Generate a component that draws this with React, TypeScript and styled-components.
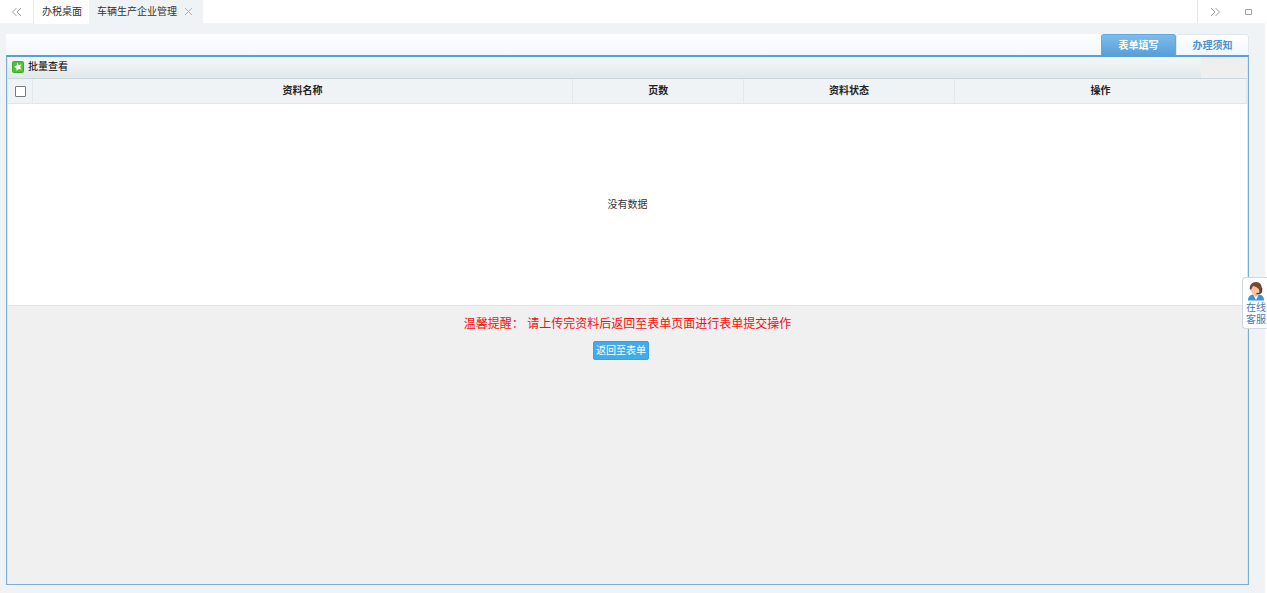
import React from "react";
import styled, { createGlobalStyle } from "styled-components";

const GlobalStyle = createGlobalStyle`
  * { box-sizing: border-box; }
  body { margin: 0; background: #fff; }
  body, button, input, table {
    font-family: "Liberation Sans", "Noto Sans CJK SC", sans-serif;
    font-size: 10px;
  }
`;

const Page = styled.div`
  display: flex;
  flex-direction: column;
  min-height: 100vh;
  margin-right: 2px;
  background: #eff3f6;
`;

const TopBar = styled.nav`
  display: flex;
  height: 24px;
  background: #fff;
  border-bottom: 1px solid #f1f3f5;
`;

const BarButton = styled.button<{ $width: number }>`
  display: flex;
  align-items: center;
  justify-content: center;
  width: ${(p) => p.$width}px;
  padding: 0 1px 0 0;
  border: 0;
  background: transparent;
  color: #a0a0a0;
`;

const PageTab = styled.div<{ $active?: boolean }>`
  display: flex;
  align-items: center;
  gap: 7px;
  height: 24px;
  padding: 0 ${(p) => (p.$active ? 10 : 7)}px 0 ${(p) => (p.$active ? 7 : 8)}px;
  border-left: 1px solid ${(p) => (p.$active ? "#eff3f6" : "#e8eaec")};
  background: ${(p) => (p.$active ? "#eff3f6" : "#fff")};
`;

const TabLink = styled.a`
  color: #333;
  line-height: 24px;
  text-decoration: none;
  white-space: nowrap;
`;

const CloseButton = styled.button`
  display: flex;
  width: 9px;
  padding: 0 0 2px;
  border: 0;
  background: transparent;
  color: #adb1b4;
`;

const BarEnd = styled.div`
  display: flex;
  margin-left: auto;
  border-left: 1px solid #e4e6e8;
`;

const Content = styled.main`
  display: flex;
  flex: 1;
  flex-direction: column;
  padding: 10px 16px 8px 6px;
`;

const FormTabs = styled.div`
  display: flex;
  justify-content: flex-end;
  height: 21px;
  background: linear-gradient(#fdfeff, #f1f8fd);
`;

const FormTab = styled.button<{ $active?: boolean }>`
  width: ${(p) => (p.$active ? 75 : 73)}px;
  padding: 1px 0 0;
  border: 1px solid ${(p) => (p.$active ? "#62a8de" : "#dfe8ee")};
  border-bottom: 0;
  border-radius: 3px 3px 0 0;
  background: ${(p) =>
    p.$active ? "linear-gradient(#7dbced, #5a9fd8)" : "linear-gradient(#fff, #eff7fd)"};
  color: ${(p) => (p.$active ? "#fff" : "#4b94d0")};
  font-weight: bold;
  line-height: 20px;
`;

const Panel = styled.section`
  display: flex;
  flex: 1;
  flex-direction: column;
  padding: 0 1px;
  border: 1px solid #7aaed6;
  border-top: 2px solid #5aa0d8;
  background: #f0f0f0;
  box-shadow: inset 1px 0 #d3e8f8, inset -1px 0 #d3e8f8, inset 0 -1px #e3f2fb;
`;

const Toolbar = styled.div`
  display: flex;
  height: 22px;
  padding-right: 46px;
  border-bottom: 1px solid #ccd8dc;
  background: #efefef;
`;

const ToolbarFill = styled.div`
  display: flex;
  flex: 1;
  align-items: center;
  padding: 0 0 1px 4px;
  background: linear-gradient(#f3f7f8, #e2e9eb);
`;

const ToolButton = styled.button`
  display: flex;
  align-items: center;
  gap: 4px;
  padding: 0;
  border: 0;
  background: transparent;
  color: #000;
  line-height: 12px;
`;

const DataTable = styled.table`
  width: 100%;
  table-layout: fixed;
  border-collapse: separate;
  border-spacing: 0;
  background: #fff;
`;

const Col = styled.col<{ $width?: string }>`
  width: ${(p) => p.$width ?? "auto"};
`;

const HeadCell = styled.th`
  height: 25px;
  padding: 0;
  border-right: 1px solid #e4e8eb;
  border-bottom: 1px solid #e0e5e8;
  background: #eff3f6;
  color: #222;
  font-weight: bold;
  line-height: 12px;
  text-align: center;
`;

const CheckBox = styled.input`
  appearance: none;
  display: block;
  width: 11px;
  height: 11px;
  margin: 0 auto;
  border: 1px solid #777;
  border-radius: 1px;
  background: #fff;
`;

const EmptyCell = styled.td`
  height: 202px;
  padding: 0 0 2px;
  border-bottom: 1px solid #e4e4e4;
  color: #333;
  text-align: center;
`;

const Footer = styled.div`
  display: flex;
  flex-direction: column;
  align-items: center;
  gap: 8px;
  padding: 9px 13px 0 0;
`;

const Notice = styled.p`
  margin: 0 0 0 13px;
  color: #f00f0f;
  font-size: 12px;
  line-height: 18px;
  white-space: pre;
`;

const ReturnButton = styled.button`
  height: 19px;
  padding: 0 2px;
  border: 1px solid #38a0e4;
  border-radius: 2px;
  background: #43abed;
  color: #fff;
  line-height: 17px;
`;

const ServiceLink = styled.a`
  position: fixed;
  top: 277px;
  right: 0;
  display: flex;
  flex-direction: column;
  align-items: center;
  width: 25px;
  height: 52px;
  padding: 4px 0 0 2px;
  border: 1px solid #cfdae3;
  border-right: 0;
  border-radius: 4px 0 0 4px;
  background: #fff;
  color: #3f79b5;
  line-height: 12px;
  text-decoration: none;
`;

const ServiceText = styled.span`
  width: 20px;
  padding-top: 1px;
`;

const Chevrons = ({ right = false }: { right?: boolean }) => (
  <svg width="11" height="10" viewBox="0 0 11 10" fill="none" stroke="currentColor" aria-hidden="true">
    <path d={right ? "M1 1l4 4-4 4M5.500 1l4 4-4 4" : "M5.500 1l-4 4 4 4M10 1L6 5l4 4"} />
  </svg>
);

const StarIcon = () => (
  <svg width="12" height="12" viewBox="0 0 12 12" aria-hidden="true">
    <rect width="12" height="12" rx="2" fill="#3fae27" />
    <rect x="1" y="1" width="10" height="10" rx="1" fill="#55c038" />
    <path d="M5.200 1.800l1.700 2.100 2.700-.3-1.400 2.300 1.400 2.500-2.800-.5-2.200 1.900-.3-2.700L2 5.800l2.600-1.200z" fill="#fff" />
  </svg>
);

const AgentIcon = () => (
  <svg width="18" height="19" viewBox="0 0 18 19" aria-hidden="true">
    <path d="M1 18.500c0-4 2-5.500 5-6h6c3 .5 5 2 5 6z" fill="#3b94dc" />
    <path d="M6 12l3 6 3-6-1-2H7z" fill="#fff" />
    <path d="M7 10h4v3l-2 2-2-2z" fill="#eeb58d" />
    <ellipse cx="8.500" cy="7.500" rx="4.500" ry="5.500" fill="#f6c39d" />
    <path d="M3 8C2 3 5 0 9 0s7 3 5.500 10l-2 1.500-.5-4C11 5.500 8.500 4.500 6 4L4.500 7z" fill="#754832" />
    <path d="M14.500 6v3c0 2-2 3-5 2.500" fill="none" stroke="#444" strokeWidth="1.500" />
  </svg>
);

export default function App() {
  return (
    <>
      <GlobalStyle />
      <Page>
        <TopBar>
          <BarButton $width={33} aria-label="向左滚动"><Chevrons /></BarButton>
          <PageTab><TabLink href="#desktop">办税桌面</TabLink></PageTab>
          <PageTab $active>
            <TabLink href="#vehicle">车辆生产企业管理</TabLink>
            <CloseButton aria-label="关闭">
              <svg width="9" height="9" viewBox="0 0 9 9" stroke="currentColor" aria-hidden="true">
                <path d="M1 1l7 7M8 1L1 8" />
              </svg>
            </CloseButton>
          </PageTab>
          <BarEnd>
            <BarButton $width={35} aria-label="向右滚动"><Chevrons right /></BarButton>
            <BarButton $width={32} aria-label="最大化">
              <svg width="8" height="8" viewBox="0 0 8 8" fill="none" stroke="currentColor" aria-hidden="true">
                <path d="M.5 1.500h6v5h-6z" />
              </svg>
            </BarButton>
          </BarEnd>
        </TopBar>
        <Content>
          <FormTabs>
            <FormTab $active>表单填写</FormTab>
            <FormTab>办理须知</FormTab>
          </FormTabs>
          <Panel>
            <Toolbar>
              <ToolbarFill>
                <ToolButton><StarIcon />批量查看</ToolButton>
              </ToolbarFill>
            </Toolbar>
            <DataTable>
              <colgroup>
                <Col $width="25px" />
                <Col $width="43.6%" />
                <Col $width="13.8%" />
                <Col $width="17%" />
                <Col />
              </colgroup>
              <thead>
                <tr>
                  <HeadCell><CheckBox type="checkbox" aria-label="全选" /></HeadCell>
                  <HeadCell>资料名称</HeadCell>
                  <HeadCell>页数</HeadCell>
                  <HeadCell>资料状态</HeadCell>
                  <HeadCell>操作</HeadCell>
                </tr>
              </thead>
              <tbody>
                <tr><EmptyCell colSpan={5}>没有数据</EmptyCell></tr>
              </tbody>
            </DataTable>
            <Footer>
              <Notice>温馨提醒： 请上传完资料后返回至表单页面进行表单提交操作</Notice>
              <ReturnButton>返回至表单</ReturnButton>
            </Footer>
          </Panel>
        </Content>
      </Page>
      <ServiceLink href="#service">
        <AgentIcon />
        <ServiceText>在线客服</ServiceText>
      </ServiceLink>
    </>
  );
}
